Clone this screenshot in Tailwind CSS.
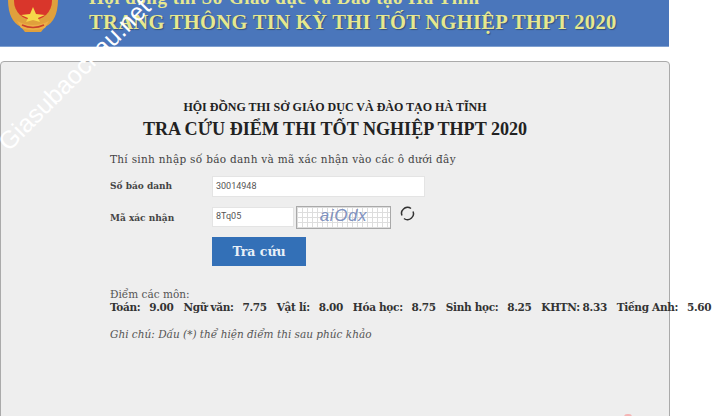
<!DOCTYPE html>
<html lang="vi">
<head>
<meta charset="utf-8">
<script src="https://cdn.jsdelivr.net/npm/@tailwindcss/browser@4"></script>
</head>
<body class="relative h-[416px] w-[712px] overflow-hidden bg-white font-['DejaVu_Serif',serif] text-[#333]">
<header class="flex h-[47px] w-[669px] overflow-hidden border-b border-[#7fa0d0] bg-[#4a76bb]">
  <svg class="ml-[7px] mt-[-15px] h-[48px] w-[53px] shrink-0" viewBox="0 0 53 48">
    <path d="M1 14 Q1 36 14 42 L18 47 H34 L38 42 Q51 36 51 14 Q26 -6 1 14Z" fill="#e0a03c"/>
    <ellipse cx="26" cy="16" rx="19" ry="19" fill="#d9362b"/>
    <polygon points="26,22 29,29 38,30 31,33 33,37 26,35 19,37 21,33 14,30 23,29" fill="#f5d84a"/>
    <path d="M10 36 Q26 44 42 36 L38 43 Q26 47 14 43Z" fill="#ecae46"/>
    <path d="M15 40 Q26 45 37 40" stroke="#c9402c" stroke-width="1.500" fill="none"/>
  </svg>
  <div class="ml-[29px] mt-[-11px] whitespace-nowrap font-['Liberation_Serif',serif] font-bold text-[#e6e88f]">
    <p class="h-[18px] text-[19px] leading-[18px] tracking-[0.5px]">Hội đồng thi Sở Giáo dục và Đào tạo Hà Tĩnh</p>
    <p class="mt-[3px] text-[20.500px] leading-[25px] tracking-[0.33px] [text-shadow:1px_1px_1px_#34507f]">TRANG THÔNG TIN KỲ THI TỐT NGHIỆP THPT 2020</p>
  </div>
</header>
<main class="mt-[14px] h-[370px] w-[670px] rounded-t-[4px] border border-[#aaa] bg-[#eeeeee] pl-[109px]">
  <div class="w-[450px] pt-[37px] text-center font-['Liberation_Serif',serif] font-bold text-[#222]">
    <h2 class="text-[12px] leading-[16px]">HỘI ĐỒNG THI SỞ GIÁO DỤC VÀ ĐÀO TẠO HÀ TĨNH</h2>
    <h1 class="mt-[3px] text-[18.100px] leading-[22px]">TRA CỨU ĐIỂM THI TỐT NGHIỆP THPT 2020</h1>
  </div>
  <p class="mt-[12px] text-[10.500px] leading-[15px] text-[#444] tracking-[0.3px]">Thí sinh nhập số báo danh và mã xác nhận vào các ô dưới đây</p>
  <div class="mt-[9px] flex h-[21px] items-center">
    <label class="w-[102px] text-[9px] font-bold text-[#444]">Số báo danh</label>
    <div class="flex h-[21px] w-[213px] items-center border border-[#e4e4e4] bg-white pl-[3px] font-['Roboto',sans-serif] text-[9px] text-[#555]">30014948</div>
  </div>
  <div class="mt-[9px] flex h-[22px] items-center">
    <label class="mt-[3px] w-[102px] text-[9px] font-bold text-[#444]">Mã xác nhận</label>
    <div class="flex h-[20px] w-[82px] items-center border border-[#e4e4e4] bg-white pl-[3px] font-['Roboto',sans-serif] text-[9px] text-[#555]">8Tq05</div>
    <div class="ml-[2px] flex h-[23px] w-[95px] items-center justify-center border border-[#a9a9a9] bg-white bg-[linear-gradient(#ddd_1px,transparent_1px),linear-gradient(90deg,#ddd_1px,transparent_1px)] bg-[length:5px_5px] pb-[2px] font-['Liberation_Sans',sans-serif] text-[17px] italic tracking-[0.6px] text-[#7f92c0]">aiOdx</div>
    <svg class="mb-[7px] ml-[9px] h-[15px] w-[15px]" viewBox="0 0 15 15" fill="none" stroke="#333" stroke-width="1.500">
      <path d="M2 9.500A5.700 5.700 0 0 1 3.500 3 5.700 5.700 0 0 1 11 2.500"/>
      <path d="M13 5.500A5.700 5.700 0 0 1 11.500 12 5.700 5.700 0 0 1 4 12.500"/>
    </svg>
  </div>
  <button class="ml-[102px] mt-[9px] block h-[29px] w-[94px] bg-[#3370b7] pt-[2px] text-[12.500px] font-bold text-[#e8f0f8]">Tra cứu</button>
  <p class="mt-[22px] text-[10.500px] leading-[13px] text-[#555]">Điểm các môn:</p>
  <p class="flex h-[12px] items-center gap-[8.800px] whitespace-nowrap text-[10.500px] font-bold leading-[14px] text-[#333] tracking-[-0.3px]">
    <span>Toán:</span><span class="mr-[1px]">9.00</span><span>Ngữ văn:</span><span class="mr-[1px]">7.75</span><span>Vật lí:</span><span class="mr-[1px]">8.00</span><span>Hóa học:</span><span class="mr-[1px]">8.75</span><span>Sinh học:</span><span class="mr-[1px]">8.25</span><span class="mr-[-6px]">KHTN:</span><span class="mr-[1px]">8.33</span><span>Tiếng Anh:</span><span>5.60</span>
  </p>
  <p class="mt-[14px] text-[10.500px] italic leading-[14px] text-[#555]">Ghi chú: Dấu (*) thể hiện điểm thi sau phúc khảo</p>
</main>
<div class="absolute left-[-27px] top-[62px] -rotate-45 whitespace-nowrap font-['Liberation_Sans',sans-serif] text-[25px] leading-none text-white">Giasubaochau.net</div>
<div class="absolute left-[624px] top-[414px] h-[6px] w-[8px] rounded-full bg-[#f5b5b5]"></div>
</body>
</html>
